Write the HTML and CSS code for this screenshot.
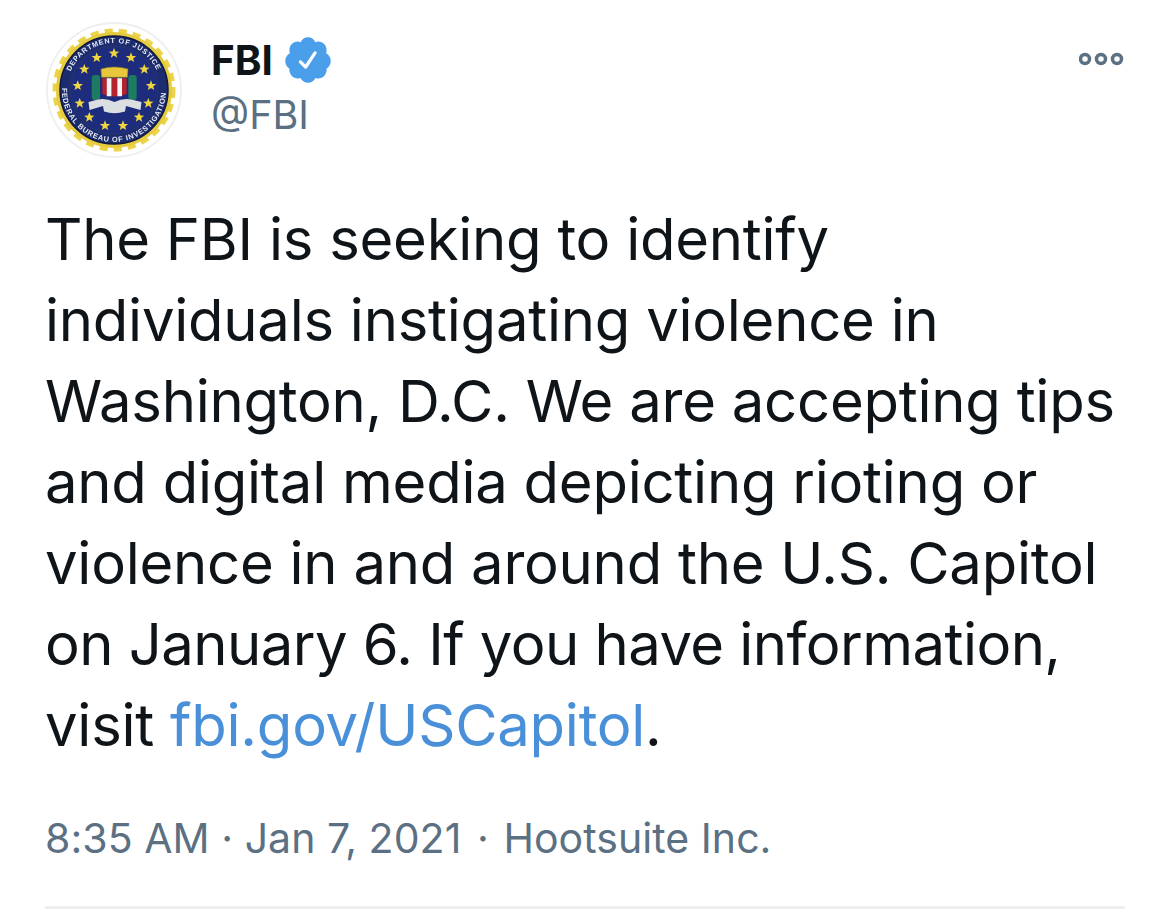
FILE: index.html
```html
<!DOCTYPE html>
<html lang="en">
<head>
<meta charset="utf-8">
<title>FBI tweet</title>
<link rel="stylesheet" href="styles.css">
</head>
<body>
<main class="tweet">
  <header class="head">
    <svg class="avatar" viewBox="0 0 136 136" aria-label="FBI seal">
      <defs>
        <path id="arcTop" d="M 24.7 49.6 A 47 47 0 0 1 111.3 49.6"/>
        <path id="arcBottom" d="M 16.15 64 A 52 52 0 1 0 119.85 64"/>
        <polygon id="star" points="0,-5.4 1.4,-1.7 5.2,-1.6 2.2,0.7 3.2,4.4 0,2.2 -3.2,4.4 -2.2,0.7 -5.2,-1.6 -1.4,-1.7"/>
      </defs>
      <circle class="s-halo" cx="68" cy="68" r="67"/>
      <circle class="s-teeth" cx="68" cy="68" r="58.5"/>
      <circle class="s-gold" cx="68" cy="68" r="58"/>
      <circle class="s-navy" cx="68" cy="68" r="54"/>
      <circle class="s-ring" cx="68" cy="68" r="44"/>
      <text class="s-text"><textPath href="#arcTop" textLength="108" lengthAdjust="spacing">DEPARTMENT OF JUSTICE</textPath></text>
      <text class="s-text s-small"><textPath href="#arcBottom" textLength="162" lengthAdjust="spacing" startOffset="2">FEDERAL BUREAU OF INVESTIGATION</textPath></text>
      <g class="s-stars">
        <use href="#star" x="68" y="31.3"/>
        <use href="#star" x="85" y="35.7"/>
        <use href="#star" x="98.3" y="47.3"/>
        <use href="#star" x="105" y="63.7"/>
        <use href="#star" x="102.3" y="81.3"/>
        <use href="#star" x="93" y="95.3"/>
        <use href="#star" x="77" y="103.7"/>
        <use href="#star" x="59" y="103.7"/>
        <use href="#star" x="43.3" y="95.3"/>
        <use href="#star" x="33.7" y="81.3"/>
        <use href="#star" x="31.7" y="63.7"/>
        <use href="#star" x="38.3" y="47.3"/>
        <use href="#star" x="50.7" y="35.7"/>
      </g>
      <rect class="s-green" x="45.7" y="53" width="8.4" height="25" rx="3"/>
      <rect class="s-green" x="82.3" y="53" width="8.4" height="25" rx="3"/>
      <path class="s-yellow" d="M55 47 Q68 43 82 47 L81.5 55.3 H55.5 Z"/>
      <path class="s-red" d="M56.3 56.3 H80.7 V72 Q68.5 77 56.3 72 Z"/>
      <path class="s-white" d="M60.8 56.3 h4.6 v18 h-4.6 z M71.4 56.3 h4.6 v18 h-4.6 z"/>
      <path class="s-scroll" d="M42.5 80 L52 77.5 Q60 76 68.5 80 Q77 76 85 77.5 L95.5 80 L94.5 88 L80 84 L79 89.5 Q68.5 93 58 89.5 L57 84 L43.5 88 Z"/>
    </svg>
    <div class="who">
      <div class="name-row">
        <span class="name">FBI</span>
        <svg class="badge" viewBox="0 0 24 24" aria-label="Verified"><path d="M22.5 12.5c0-1.58-.875-2.95-2.148-3.6.154-.435.238-.905.238-1.4 0-2.21-1.71-3.998-3.818-3.998-.47 0-.92.084-1.336.25C14.818 2.415 13.51 1.5 12 1.5s-2.816.917-3.437 2.25c-.415-.165-.866-.25-1.336-.25-2.11 0-3.818 1.79-3.818 4 0 .494.083.964.237 1.4-1.272.65-2.147 2.018-2.147 3.6 0 1.495.782 2.798 1.942 3.486-.02.17-.032.34-.032.514 0 2.21 1.708 4 3.818 4 .47 0 .92-.086 1.335-.25.62 1.334 1.926 2.25 3.437 2.25 1.512 0 2.818-.916 3.437-2.25.415.163.865.248 1.336.248 2.11 0 3.818-1.79 3.818-4 0-.174-.012-.344-.033-.513 1.158-.687 1.943-1.99 1.943-3.484zm-6.616-3.334l-4.334 6.5c-.145.217-.382.334-.625.334-.143 0-.288-.04-.416-.126l-.115-.094-2.415-2.415c-.293-.293-.293-.768 0-1.06s.768-.294 1.06 0l1.77 1.767 3.825-5.74c.23-.345.696-.436 1.04-.207.346.23.44.696.21 1.04z"/></svg>
      </div>
      <div class="handle">@FBI</div>
    </div>
    <svg class="more" viewBox="0 0 46 14" aria-label="More">
      <circle cx="6" cy="7" r="4.5"/>
      <circle cx="22" cy="7" r="4.5"/>
      <circle cx="38" cy="7" r="4.5"/>
    </svg>
  </header>
  <p class="text">The FBI is seeking to identify<br>individuals instigating violence in<br>Washington, D.C. We are accepting tips<br>and digital media depicting rioting or<br>violence in and around the U.S. Capitol<br><span class="tight">on January 6. If you have information,</span><br>visit <a class="link" href="#">fbi.gov/USCapitol</a>.</p>
  <div class="meta">8:35 AM · Jan 7, 2021 <span class="sep">·</span> Hootsuite Inc.</div>
  <div class="rule"></div>
</main>
</body>
</html>
```
FILE: styles.css
```css
html, body {
  margin: 0;
  height: 100%;
  background: #fff;
  overflow: hidden;
}
.tweet {
  box-sizing: border-box;
  height: 912px;
  padding: 22px 45px 3px 46px;
  font-family: Inter, "Liberation Sans", sans-serif;
  color: #0f1419;
  display: flex;
  flex-direction: column;
}
.head {
  display: flex;
  align-items: flex-start;
  height: 136px;
}
.avatar {
  width: 136px;
  height: 136px;
  flex: none;
  filter: blur(0.6px);
}
.s-halo { fill: #fff; stroke: #eef0ee; stroke-width: 2; }
.s-teeth { fill: none; stroke: #ecd44a; stroke-width: 6; stroke-dasharray: 8 6; }
.s-gold { fill: #e6cb3f; }
.s-navy { fill: #1c2c6e; stroke: #10183f; stroke-width: 1.5; }
.s-ring { fill: #1d2c7c; stroke: #27376f; stroke-width: 1; }
.s-text { fill: #e8ecf4; font: 700 7.2px "Liberation Sans", sans-serif; }
.s-small { font-size: 7.4px; }
.s-stars { fill: #efd53e; }
.s-green { fill: #1d7a63; }
.s-yellow { fill: #e8c83a; stroke: #8a7a20; stroke-width: 0.6; }
.s-red { fill: #b3242f; }
.s-white { fill: #f5f5f5; }
.s-scroll { fill: #dcdfe2; }
.who {
  margin-left: 29px;
  padding-top: 15px;
  display: flex;
  flex-direction: column;
}
.name-row {
  display: flex;
  align-items: center;
  height: 48px;
}
.name {
  font-size: 40.5px;
  font-weight: 700;
  line-height: 48px;
}
.badge {
  width: 52px;
  height: 52px;
  margin-left: 9px;
  margin-top: -2px;
  fill: #4a9eea;
}
.handle {
  font-size: 39.5px;
  line-height: 48px;
  color: #5b7083;
  margin-top: 6px;
}
.more {
  margin-left: auto;
  margin-top: 30px;
  width: 46px;
  height: 14px;
  flex: none;
  fill: none;
  stroke: #5b7083;
  stroke-width: 3.5;
}
.text {
  margin: 41px 0 0 -1px;
  font-size: 58px;
  line-height: 81px;
  letter-spacing: -0.25px;
  white-space: nowrap;
}
.tight {
  letter-spacing: -0.55px;
}
.link {
  color: #4a90d9;
  text-decoration: none;
}
.meta {
  margin: 48px 0 0 -1px;
  font-size: 41px;
  line-height: 48px;
  letter-spacing: 0.05px;
  color: #5b7083;
  white-space: nowrap;
}
.sep {
  margin: 0 3px 0 4px;
}
.rule {
  margin: auto 0 0 -1px;
  height: 3px;
  background: #eeeeef;
}
```
